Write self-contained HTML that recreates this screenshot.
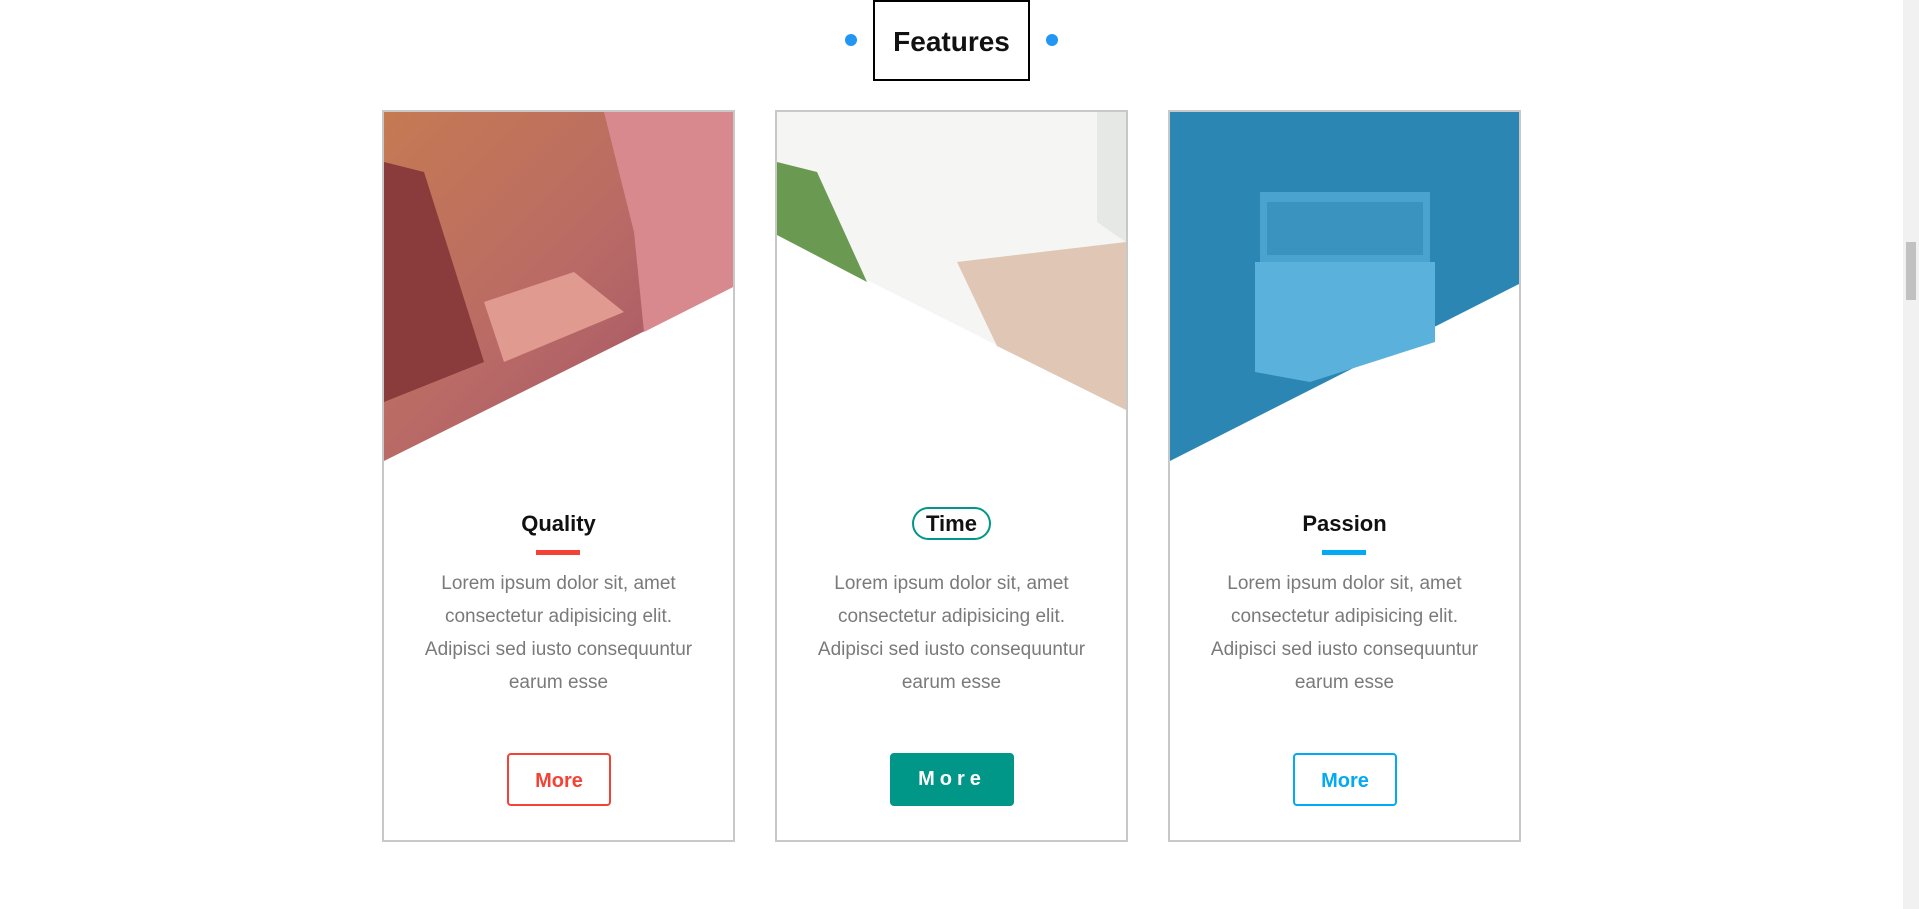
<!DOCTYPE html>
<html><head><style>
html,body{margin:0;padding:0;width:1919px;height:909px;overflow:hidden;background:#fff;font-family:"Liberation Sans",sans-serif;}
.sb{position:absolute;left:1903px;top:0;width:16px;height:909px;background:#f1f1f1;}
.sb div{position:absolute;left:3px;top:242px;width:10px;height:58px;background:#c1c1c1;}
.hbox{position:absolute;left:873px;top:0;width:153px;height:77px;border:2px solid #000;text-align:center;line-height:80px;font-size:28px;font-weight:bold;color:#111;}
.dot{position:absolute;top:34px;width:12px;height:12px;border-radius:50%;background:#2196f3;}
.card{position:absolute;top:110px;width:349px;height:728px;border:2px solid #c8c8c8;background:#fff;overflow:hidden;}
.card svg{position:absolute;left:0;top:0;}
.t{position:absolute;left:0;width:100%;top:399px;text-align:center;font-size:22px;font-weight:bold;color:#111;}
.ul{position:absolute;top:438px;left:152px;width:44px;height:5px;}
.p{position:absolute;left:0;width:100%;top:455px;text-align:center;font-size:19px;line-height:33px;color:#7a7a7a;}
.btn{position:absolute;top:641px;height:53px;border-radius:4px;box-sizing:border-box;text-align:center;line-height:53px;font-size:20px;font-weight:bold;}
</style></head><body>
<div class="dot" style="left:845px"></div>
<div class="hbox">Features</div>
<div class="dot" style="left:1046px"></div>

<div class="card" style="left:382px">
<svg width="349" height="360"><defs><linearGradient id="g1" x1="0" y1="0" x2="1" y2="1"><stop offset="0" stop-color="#c67a52"/><stop offset=".5" stop-color="#b96a66"/><stop offset="1" stop-color="#9a4e66"/></linearGradient></defs>
<polygon points="0,0 349,0 349,175 0,349" fill="url(#g1)"/>
<polygon points="220,0 349,0 349,175 260,220 250,120" fill="#d8898e"/>
<polygon points="0,50 40,60 100,250 0,290" fill="#8a3c3c"/>
<polygon points="100,190 190,160 240,200 120,250" fill="#e19a8f"/>
</svg>
<div class="t">Quality</div><div class="ul" style="background:#f44336"></div>
<div class="p">Lorem ipsum dolor sit, amet<br>consectetur adipisicing elit.<br>Adipisci sed iusto consequuntur<br>earum esse</div>
<div class="btn" style="left:123px;width:104px;border:2px solid #f44336;color:#f44336">More</div>
</div>

<div class="card" style="left:775px">
<svg width="349" height="360"><polygon points="0,0 349,0 349,298 0,123" fill="#f5f5f3"/>
<polygon points="0,50 40,60 90,170 0,123" fill="#6a9a52"/>
<polygon points="180,150 349,130 349,298 220,234" fill="#e0c6b4"/>
<polygon points="320,0 349,0 349,130 320,110" fill="#e6e8e6"/></svg>
<div class="t"><span style="border:2px solid #009688;border-radius:18px;padding:2px 12px">Time</span></div>
<div class="p">Lorem ipsum dolor sit, amet<br>consectetur adipisicing elit.<br>Adipisci sed iusto consequuntur<br>earum esse</div>
<div class="btn" style="left:113px;width:124px;background:#009688;color:#fff;letter-spacing:5px">More</div>
</div>

<div class="card" style="left:1168px">
<svg width="349" height="360"><polygon points="0,0 349,0 349,172 0,349" fill="#2b86b3"/>
<polygon points="90,80 260,80 260,150 90,150" fill="#4aa3cf"/>
<polygon points="85,150 265,150 265,230 140,270 85,260" fill="#5ab1dc"/>
<polygon points="97,90 253,90 253,143 97,143" fill="#3a92bf"/></svg>
<div class="t">Passion</div><div class="ul" style="background:#03a9f4"></div>
<div class="p">Lorem ipsum dolor sit, amet<br>consectetur adipisicing elit.<br>Adipisci sed iusto consequuntur<br>earum esse</div>
<div class="btn" style="left:123px;width:104px;border:2px solid #03a9f4;color:#03a9f4">More</div>
</div>
<div class="sb"><div></div></div>
</body></html>
